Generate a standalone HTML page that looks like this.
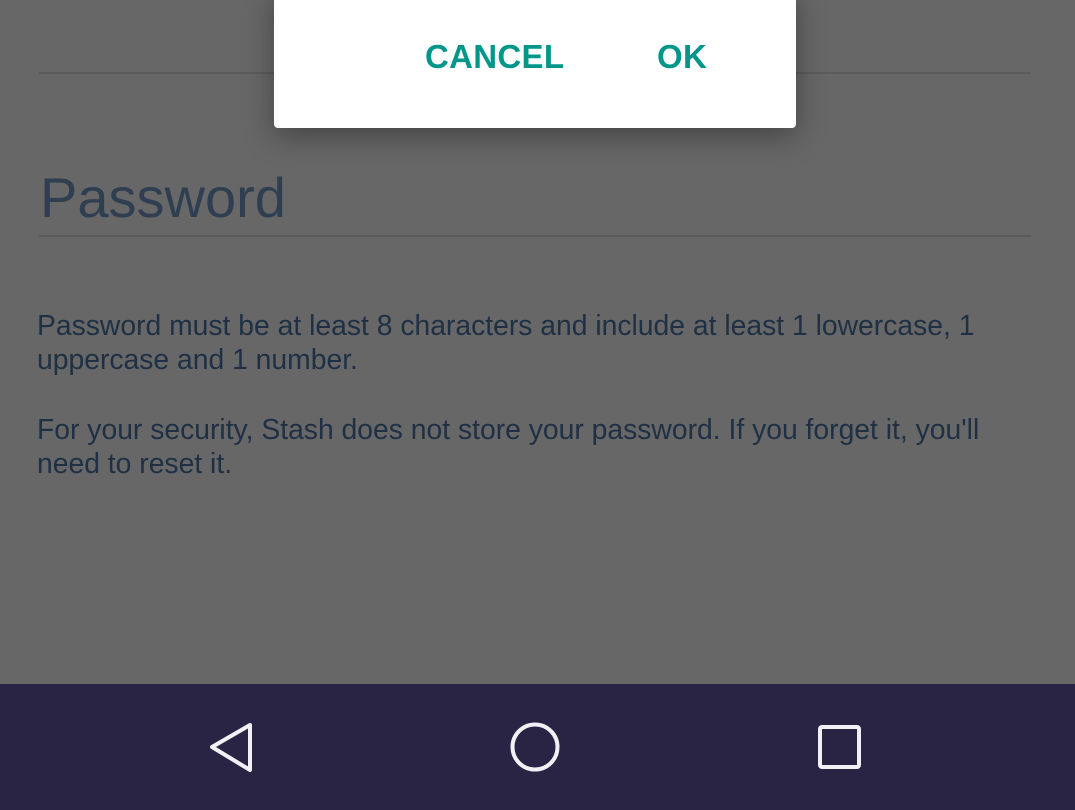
<!DOCTYPE html>
<html><head><style>
body{margin:0;width:1075px;height:810px;background:#676767;position:relative;overflow:hidden;font-family:"Liberation Sans",sans-serif}
.line{position:absolute;left:39px;width:992px;height:2px;background:#5b5b5b}
.dlg{position:absolute;left:274px;top:-10px;width:522px;height:138px;background:#fff;border-radius:4px;box-shadow:0 8px 30px rgba(0,0,0,.35)}
.btn{position:absolute;color:#00978a;font-weight:bold;font-size:33px;letter-spacing:0.3px}
.pw{position:absolute;left:40px;top:165px;font-size:56px;color:#2f3e50}
.p{position:absolute;left:37px;width:1000px;font-size:28.3px;line-height:34px;color:#1f3044}
.nav{position:absolute;left:0;top:684px;width:1075px;height:126px;background:#2a2444}
</style></head><body>
<div class="line" style="top:72px"></div>
<div class="line" style="top:235px"></div>
<div class="dlg"><span class="btn" style="left:151px;top:48px">CANCEL</span><span class="btn" style="left:383px;top:48px">OK</span></div>
<div class="pw">Password</div>
<div class="p" style="top:308px">Password must be at least 8 characters and include at least 1 lowercase, 1 uppercase and 1 number.</div>
<div class="p" style="top:412px">For your security, Stash does not store your password. If you forget it, you'll need to reset it.</div>
<div class="nav">
<svg width="1075" height="126" style="position:absolute;left:0;top:0">
<path d="M250 41 L212 63 L250 86 Z" fill="none" stroke="#f2f0f5" stroke-width="4" stroke-linejoin="round"/>
<circle cx="535" cy="63" r="22.5" fill="none" stroke="#f2f0f5" stroke-width="4"/>
<rect x="820" y="43" width="39" height="40" rx="2" fill="none" stroke="#f2f0f5" stroke-width="4"/>
</svg>
</div>
</body></html>
